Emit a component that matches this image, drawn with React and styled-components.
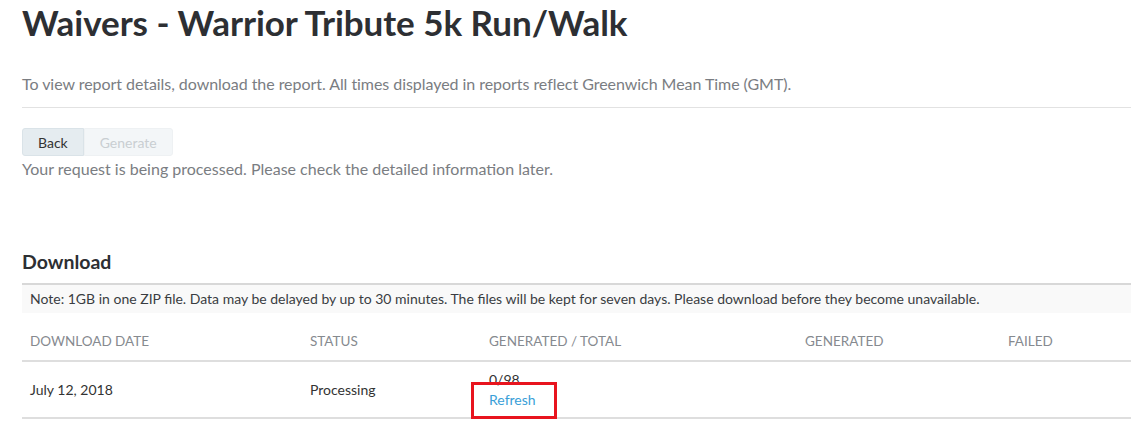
import React from 'react';
import styled, { createGlobalStyle } from 'styled-components';

const GlobalStyle = createGlobalStyle`
  body {
    margin: 0;
    background: #fff;
    font-family: Lato, 'Open Sans', sans-serif;
    color: #333;
  }
`;

const Page = styled.div`
  padding: 0 3px 0 22px;
`;

const Title = styled.h1`
  margin: 0;
  font-size: 35px;
  font-weight: 700;
  line-height: 44px;
  letter-spacing: -0.05px;
  color: #2d2f33;
`;

const Intro = styled.p`
  margin: 29px 0 0;
  padding-bottom: 12px;
  font-size: 16px;
  line-height: 22px;
  letter-spacing: -0.05px;
  color: #7a7d82;
  border-bottom: 1px solid #e2e2e2;
`;

const ButtonGroup = styled.div`
  display: flex;
  margin-top: 20px;
`;

const Button = styled.button`
  height: 28px;
  padding: 0 15px;
  font-family: inherit;
  font-size: 14px;
  border: 1px solid ${p => (p.disabled ? '#eef1f3' : '#dae3e8')};
  background: ${p => (p.disabled ? '#f3f6f8' : '#e5ecf0')};
  color: ${p => (p.disabled ? '#c9ced2' : '#333')};
  border-radius: ${p => (p.disabled ? '0 3px 3px 0' : '3px 0 0 3px')};
  cursor: ${p => (p.disabled ? 'default' : 'pointer')};
`;

const Notice = styled.p`
  margin: 0;
  font-size: 16px;
  line-height: 26px;
  color: #7a7d82;
`;

const SectionTitle = styled.h2`
  margin: 68px 0 0;
  font-size: 19.5px;
  font-weight: 700;
  line-height: 24px;
  color: #2d2f33;
`;

const Note = styled.div`
  margin-top: 9px;
  border-top: 2px solid #d8d8d8;
  background: #f9f9f9;
  height: 28px;
  padding: 0 8px;
  font-size: 14px;
  line-height: 28px;
  color: #3a3d42;
`;

const Table = styled.table`
  width: 100%;
  table-layout: fixed;
  border-collapse: collapse;
  font-size: 14px;
`;

const Th = styled.th`
  width: ${p => p.w || 'auto'};
  height: 36px;
  padding: 0 8px 11px;
  vertical-align: bottom;
  text-align: left;
  font-size: 13.5px;
  line-height: 16px;
  font-weight: 400;
  text-transform: uppercase;
  color: #868a8f;
  border-bottom: 2px solid #dedede;
`;

const Td = styled.td`
  position: relative;
  height: 55px;
  padding: 0 8px;
  color: #333;
  border-bottom: 2px solid #dedede;
`;

const Stack = styled.div`
  display: flex;
  flex-direction: column;
  line-height: 20px;
`;

const Link = styled.a`
  color: #3a9fd8;
  text-decoration: none;
`;

const Highlight = styled.span`
  position: absolute;
  left: -10px;
  top: 20px;
  width: 86px;
  height: 37px;
  box-sizing: border-box;
  border: 3px solid #e8141e;
  pointer-events: none;
`;

export default function App() {
  return (
    <Page>
      <GlobalStyle />
      <Title>Waivers - Warrior Tribute 5k Run/Walk</Title>
      <Intro>
        To view report details, download the report. All times displayed in reports reflect Greenwich Mean Time (GMT).
      </Intro>
      <ButtonGroup>
        <Button>Back</Button>
        <Button disabled>Generate</Button>
      </ButtonGroup>
      <Notice>Your request is being processed. Please check the detailed information later.</Notice>

      <SectionTitle>Download</SectionTitle>
      <Note>
        Note: 1GB in one ZIP file. Data may be delayed by up to 30 minutes. The files will be kept for seven days. Please download before they become unavailable.
      </Note>
      <Table>
        <thead>
          <tr>
            <Th w="264px">Download Date</Th>
            <Th w="163px">Status</Th>
            <Th w="300px">Generated / Total</Th>
            <Th w="187px">Generated</Th>
            <Th>Failed</Th>
          </tr>
        </thead>
        <tbody>
          <tr>
            <Td>July 12, 2018</Td>
            <Td>Processing</Td>
            <Td>
              <Stack>
                <span>0/98</span>
                <Link href="#">Refresh</Link>
              </Stack>
              <Highlight />
            </Td>
            <Td />
            <Td />
          </tr>
        </tbody>
      </Table>
    </Page>
  );
}
